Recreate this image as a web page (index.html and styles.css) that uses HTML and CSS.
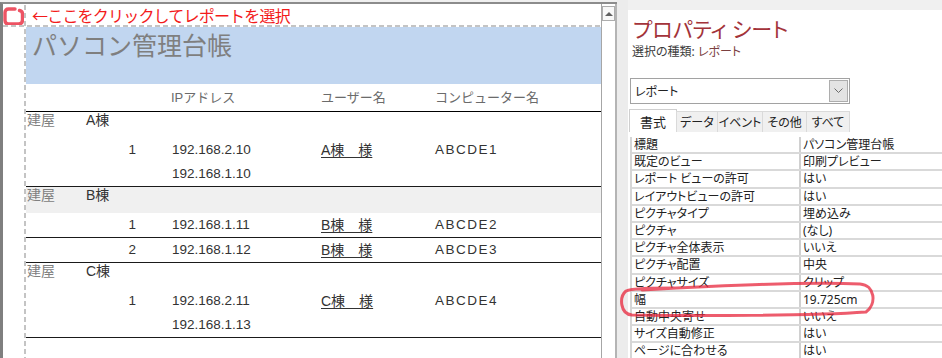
FILE: index.html
```html
<!DOCTYPE html>
<html lang="ja">

<head>
    <meta charset="UTF-8">
    <meta name="viewport" content="width=device-width, initial-scale=1.0">
    <title>パソコン管理台帳 - プロパティ シート</title>
    <link rel="stylesheet" href="styles.css">
</head>

<body>
    <div class="app">
        <section class="report-frame">
            <div class="report">
                <div class="corner">
                    <svg class="marker" width="21" height="21" viewBox="0 0 21 21">
                        <path d="M12 5 L5.5 5 Q2 5 2 8.5 L2 16.5 Q2 20 5.5 20 L15.5 20 Q19.5 20 19.5 16 L19.5 10 Q19.5 7 16.5 6.5"
                            fill="none" stroke="#e8283c" stroke-width="3.4" stroke-linecap="round" opacity="0.8" />
                    </svg>
                    <span class="hint">←ここをクリックしてレポートを選択</span>
                </div>
                <div class="guide-h"></div>

                <div class="canvas">
                    <div class="report-title">パソコン管理台帳</div>

                    <div class="page-head rec-grid">
                        <span class="c-ip">IPアドレス</span>
                        <span class="c-user">ユーザー名</span>
                        <span class="c-pc">コンピューター名</span>
                    </div>

                    <div class="group">
                        <div class="group-head rec-grid">
                            <span class="g-label">建屋</span>
                            <span class="g-name">A棟</span>
                        </div>
                        <div class="record rec-grid">
                            <span class="c-no">1</span>
                            <div class="c-ip">
                                <div>192.168.2.10</div>
                                <div>192.168.1.10</div>
                            </div>
                            <span class="c-user"><u>A棟　様</u></span>
                            <span class="c-pc">ABCDE1</span>
                        </div>
                    </div>

                    <div class="group">
                        <div class="group-head rec-grid shaded">
                            <span class="g-label">建屋</span>
                            <span class="g-name">B棟</span>
                        </div>
                        <div class="record rec-grid">
                            <span class="c-no">1</span>
                            <div class="c-ip">
                                <div>192.168.1.11</div>
                            </div>
                            <span class="c-user"><u>B棟　様</u></span>
                            <span class="c-pc">ABCDE2</span>
                        </div>
                        <div class="record rec-grid">
                            <span class="c-no">2</span>
                            <div class="c-ip">
                                <div>192.168.1.12</div>
                            </div>
                            <span class="c-user"><u>B棟　様</u></span>
                            <span class="c-pc">ABCDE3</span>
                        </div>
                    </div>

                    <div class="group">
                        <div class="group-head rec-grid">
                            <span class="g-label">建屋</span>
                            <span class="g-name">C棟</span>
                        </div>
                        <div class="record rec-grid">
                            <span class="c-no">1</span>
                            <div class="c-ip">
                                <div>192.168.2.11</div>
                                <div>192.168.1.13</div>
                            </div>
                            <span class="c-user"><u>C棟　様</u></span>
                            <span class="c-pc">ABCDE4</span>
                        </div>
                    </div>
                </div>
            </div>

            <div class="vscroll">
                <div class="vscroll-up"><span class="arrow-up"></span></div>
            </div>
        </section>

        <div class="split"></div>

        <aside class="props">
            <div class="props-title">プロパティ シート</div>
            <div class="props-sub">選択の種類: <span class="props-kind">レポート</span></div>

            <div class="select">
                <span>レポート</span>
                <span class="select-btn">
                    <svg width="9" height="6" viewBox="0 0 9 6">
                        <polyline points="0.5,0.5 4.5,4.5 8.5,0.5" fill="none" stroke="#6a6a6a" stroke-width="1" />
                    </svg>
                </span>
            </div>

            <div class="tabs">
                <span class="tab active">書式</span>
                <span class="tab w41">データ</span>
                <span class="tab w45">イベント</span>
                <span class="tab w44">その他</span>
                <span class="tab w43">すべて</span>
            </div>

            <div class="prop-grid">
                <div class="prop-row"><span>標題</span><span>パソコン管理台帳</span></div>
                <div class="prop-row"><span>既定のビュー</span><span>印刷プレビュー</span></div>
                <div class="prop-row"><span>レポート ビューの許可</span><span>はい</span></div>
                <div class="prop-row"><span>レイアウトビューの許可</span><span>はい</span></div>
                <div class="prop-row"><span>ピクチャタイプ</span><span>埋め込み</span></div>
                <div class="prop-row"><span>ピクチャ</span><span>(なし)</span></div>
                <div class="prop-row"><span>ピクチャ全体表示</span><span>いいえ</span></div>
                <div class="prop-row"><span>ピクチャ配置</span><span>中央</span></div>
                <div class="prop-row"><span>ピクチャサイズ</span><span>クリップ</span></div>
                <div class="prop-row"><span>幅</span><span>19.725cm</span></div>
                <div class="prop-row"><span>自動中央寄せ</span><span>いいえ</span></div>
                <div class="prop-row"><span>サイズ自動修正</span><span>はい</span></div>
                <div class="prop-row"><span>ページに合わせる</span><span>はい</span></div>
            </div>
        </aside>

        <!-- hand-drawn highlight around the width row -->
        <svg class="annot" width="270" height="46" viewBox="0 0 270 46">
            <defs>
                <filter id="soft">
                    <feGaussianBlur stdDeviation="0.5" />
                </filter>
            </defs>
            <path d="M30 14 C100 10, 200 6, 248 8 C263 9, 265 28, 254 36 C200 40, 80 40, 20 39 C8 38, 7 21, 14 15 C20 12, 40 12, 62 12"
                fill="none" stroke="#e8283c" stroke-width="3" stroke-linecap="round" opacity="0.75" filter="url(#soft)" />
        </svg>
    </div>
</body>

</html>
```

FILE: styles.css
```css
html,
body {
    margin: 0;
    padding: 0;
}

body {
    width: 942px;
    height: 358px;
    overflow: hidden;
    background-color: #f0f0f0;
    font-family: "Liberation Sans", "Noto Sans CJK JP", sans-serif;
    color: #333;
}

.app {
    position: relative;
    display: flex;
    height: 358px;
}

/* report design surface */

.report-frame {
    display: flex;
    margin-top: 2px;
    border-top: 2px solid #8c8c8c;
    border-left: 3px solid #7f7f7f;
}

.report {
    width: 598px;
    background-color: white;
    background-image: repeating-linear-gradient(to bottom, #c4c4c4 0 5px, transparent 5px 8px);
    background-size: 2px 100%;
    background-position: 21px 1px;
    background-repeat: no-repeat;
}

.corner {
    display: flex;
    align-items: center;
    height: 21px;
}

.marker {
    flex: none;
}

.hint {
    margin-left: 8px;
    font-family: "Noto Sans CJK JP", sans-serif;
    font-size: 16px;
    line-height: 20px;
    letter-spacing: -0.8px;
    color: #f31b1b;
    white-space: nowrap;
}

.guide-h {
    height: 2px;
    background-image: repeating-linear-gradient(to right, #c4c4c4 0 5px, transparent 5px 8px);
}

.canvas {
    margin-left: 23px;
}

.report-title {
    height: 57px;
    box-sizing: border-box;
    padding: 2px 0 0 6px;
    background-color: #c1d6f0;
    font-family: "Noto Sans CJK JP", sans-serif;
    font-size: 25px;
    line-height: 30px;
    color: #7f7f7f;
}

.rec-grid {
    display: grid;
    grid-template-columns: 60px 50px 36px 149px 114px 1fr;
    align-items: start;
}

.rec-grid .c-no {
    grid-column: 2;
    text-align: right;
}

.rec-grid .c-ip {
    grid-column: 4;
}

.rec-grid .c-user {
    grid-column: 5;
}

.rec-grid .c-pc {
    grid-column: 6;
}

.page-head {
    height: 27px;
    border-bottom: 1px solid #000;
    font-size: 13px;
    line-height: 27px;
    color: #6b6b6b;
}

.page-head .c-ip {
    margin-left: -1px;
}

.group-head {
    height: 26px;
    font-size: 14px;
    line-height: 17px;
}

.group-head.shaded {
    background-color: #f0f0f0;
}

.g-label {
    grid-column: 1;
    padding-left: 1px;
    color: #808080;
}

.g-name {
    grid-column: 2 / 4;
    color: #333;
}

.record {
    border-bottom: 1px solid #1a1a1a;
    font-size: 13.5px;
    line-height: 24px;
    color: #333;
}

.record .c-user {
    font-size: 14px;
}

.record .c-user u {
    text-underline-offset: 2px;
}

.record .c-pc {
    letter-spacing: 1.5px;
}

/* vertical scrollbar */

.vscroll {
    width: 13px;
    padding-top: 2px;
    background-color: white;
    border-left: 1px solid #a6a6a6;
    border-right: 2px solid #b4b4b4;
}

.vscroll-up {
    display: flex;
    align-items: center;
    justify-content: center;
    height: 15px;
    box-sizing: border-box;
    border: 1px solid #adadad;
    background-color: #f8f8f8;
}

.arrow-up {
    width: 0;
    height: 0;
    border-left: 4px solid transparent;
    border-right: 4px solid transparent;
    border-bottom: 4px solid #606060;
}

.split {
    width: 11px;
    background-color: #ececec;
}

/* property sheet */

.props {
    flex: 1;
    margin-top: 10px;
    background-color: white;
    font-family: "Noto Sans", "Noto Sans CJK JP", sans-serif;
    font-feature-settings: "palt";
    color: #222;
}

.props-title {
    margin: 6px 0 0 5px;
    font-size: 21px;
    line-height: 26px;
    color: #a3333a;
    white-space: nowrap;
}

.props-sub {
    margin: 2px 0 0 4px;
    font-size: 12px;
    line-height: 16px;
    color: #3c3c3c;
}

.props-kind {
    color: #7b4040;
}

.select {
    display: flex;
    align-items: center;
    width: 220px;
    height: 26px;
    box-sizing: border-box;
    margin: 18px 0 0 2px;
    padding-left: 4px;
    border: 1px solid #a2a2a2;
    font-size: 12px;
}

.select-btn {
    display: flex;
    align-items: center;
    justify-content: center;
    width: 17px;
    height: 20px;
    margin-left: auto;
    margin-right: 1px;
    background-color: #e3e3e3;
    border: 1px solid #adadad;
}

.tabs {
    display: flex;
    align-items: flex-end;
    height: 23px;
    margin: 5px 0 0 1px;
}

.tab {
    display: flex;
    align-items: center;
    justify-content: center;
    height: 21px;
    box-sizing: border-box;
    margin-left: -1px;
    background-color: #f0f0f0;
    border: 1px solid #dadada;
    border-bottom: none;
    font-size: 12px;
    white-space: nowrap;
}

.tab.active {
    width: 48px;
    height: 23px;
    margin-left: 0;
    background-color: white;
    border-color: #cfcfcf;
    font-size: 13px;
}

.w41 {
    width: 42px;
}

.w45 {
    width: 46px;
}

.w44 {
    width: 45px;
}

.w43 {
    width: 44px;
}

.prop-grid {
    margin: 5px 0 0 2px;
    border-left: 2px solid #d6d6d6;
}

.prop-row {
    display: grid;
    grid-template-columns: 167px 1fr;
    height: 17.2px;
    box-sizing: border-box;
    border-bottom: 2px solid #d9d9d9;
    font-size: 12px;
    line-height: 15px;
    white-space: nowrap;
}

.prop-row span:first-child {
    padding-left: 2px;
}

.prop-row span:last-child {
    padding-left: 2px;
    border-left: 2px solid #d0d0d0;
}

.annot {
    position: absolute;
    left: 612px;
    top: 276px;
    pointer-events: none;
}
```
